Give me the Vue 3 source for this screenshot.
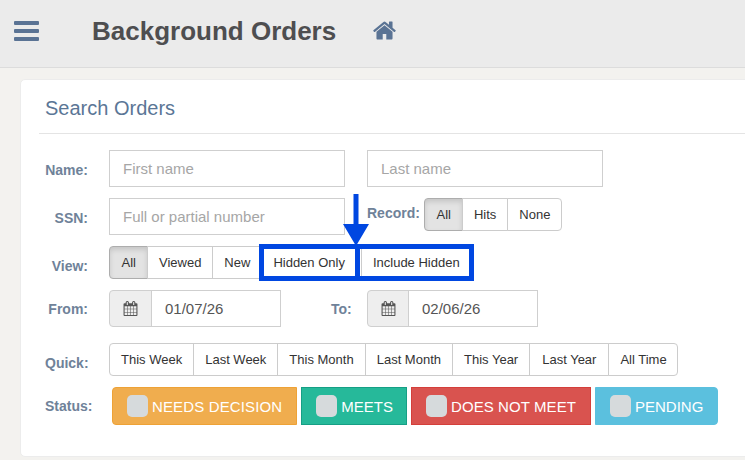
<template>
  <div class="page">
    <header class="topbar">
      <div class="burger"><span></span><span></span><span></span></div>
      <h1 class="page-title">Background Orders</h1>
      <svg class="home" viewBox="0 0 1792 1792"><path fill="currentColor" d="M1472 992v480q0 26-19 45t-45 19h-384v-384h-256v384h-384q-26 0-45-19t-19-45v-480q0-1 .5-3t.5-3l575-474 575 474q1 2 1 6zm223-69l-62 74q-8 9-21 11h-3q-13 0-21-7l-692-577-692 577q-12 8-24 7-13-2-21-11l-62-74q-8-10-7-23.500t11-21.500l719-599q32-26 76-26t76 26l244 204v-195q0-14 9-23t23-9h192q14 0 23 9t9 23v408l219 182q10 8 11 21.500t-7 23.500z"/></svg>
    </header>

    <main class="card">
      <h2 class="card-title">Search Orders</h2>
      <hr class="rule" />

      <form class="form" @submit.prevent>
        <div class="row row-name">
          <label class="lbl">Name:</label>
          <input class="field" placeholder="First name" />
          <input class="field field-last" placeholder="Last name" />
        </div>

        <div class="row row-ssn">
          <label class="lbl">SSN:</label>
          <input class="field" placeholder="Full or partial number" />
          <label class="lbl lbl-record">Record:</label>
          <div class="group">
            <button v-for="b in recordOpts" :key="b" type="button" class="btn" :class="{ active: b === 'All' }">{{ b }}</button>
          </div>
        </div>

        <div class="row row-view">
          <label class="lbl">View:</label>
          <div class="group">
            <button v-for="b in viewOpts" :key="b" type="button" class="btn" :class="{ active: b === 'All', wide: b === 'Hidden Only' }">{{ b }}</button>
          </div>
          <div class="callout"><i class="callout-bar"></i></div>
          <svg class="arrow" viewBox="0 0 26 52"><path fill="#0047e1" d="M10.500 0h5v30H26L13 52 0 30h10.500z"/></svg>
        </div>

        <div class="row row-dates">
          <label class="lbl lbl-date">From:</label>
          <div class="date">
            <span class="addon"><svg viewBox="0 0 1792 1792"><path fill="currentColor" :d="calendarPath"/></svg></span>
            <input class="date-input" value="01/07/26" />
          </div>
          <label class="lbl lbl-to">To:</label>
          <div class="date date-to">
            <span class="addon"><svg viewBox="0 0 1792 1792"><path fill="currentColor" :d="calendarPath"/></svg></span>
            <input class="date-input" value="02/06/26" />
          </div>
        </div>

        <div class="row row-quick">
          <label class="lbl">Quick:</label>
          <div class="group">
            <button v-for="b in quickOpts" :key="b" type="button" class="btn">{{ b }}</button>
          </div>
        </div>

        <div class="row row-status">
          <label class="lbl lbl-status">Status:</label>
          <div class="statuses">
            <button v-for="s in statuses" :key="s.label" type="button" class="status" :class="s.cls">
              <span class="check"></span>{{ s.label }}
            </button>
          </div>
        </div>
      </form>
    </main>
  </div>
</template>

<script setup>
const recordOpts = ['All', 'Hits', 'None']
const viewOpts = ['All', 'Viewed', 'New', 'Hidden Only', 'Include Hidden']
const quickOpts = ['This Week', 'Last Week', 'This Month', 'Last Month', 'This Year', 'Last Year', 'All Time']
const statuses = [
  { label: 'NEEDS DECISION', cls: 'orange' },
  { label: 'MEETS', cls: 'green' },
  { label: 'DOES NOT MEET', cls: 'red' },
  { label: 'PENDING', cls: 'blue' }
]
const calendarPath = 'M192 1664h288v-288h-288v288zm352 0h320v-288h-320v288zm-352-352h288v-320h-288v320zm352 0h320v-320h-320v320zm-352-384h288v-288h-288v288zm736 736h320v-288h-320v288zm-384-736h320v-288h-320v288zm768 736h288v-288h-288v288zm-384-352h320v-320h-320v320zm-352-864v-288q0-13-9.500-22.500t-22.500-9.500h-64q-13 0-22.500 9.500t-9.500 22.500v288q0 13 9.500 22.500t22.500 9.500h64q13 0 22.500-9.500t9.500-22.500zm736 864h288v-320h-288v320zm-384-384h320v-288h-320v288zm384 0h288v-288h-288v288zm32-480v-288q0-13-9.500-22.500t-22.500-9.500h-64q-13 0-22.500 9.500t-9.500 22.500v288q0 13 9.500 22.500t22.500 9.500h64q13 0 22.500-9.500t9.500-22.500zm384-64v1280q0 52-38 90t-90 38h-1408q-52 0-90-38t-38-90v-1280q0-52 38-90t90-38h128v-96q0-66 47-113t113-47h64q66 0 113 47t47 113v96h384v-96q0-66 47-113t113-47h64q66 0 113 47t47 113v96h128q52 0 90 38t38 90z'
</script>

<style>
html, body { margin: 0; overflow: hidden; }
</style>

<style scoped>
.page {
  width: 745px;
  height: 460px;
  overflow: hidden;
  background: #f3f2ef;
  font-family: "Liberation Sans", Arial, sans-serif;
  box-sizing: border-box;
}

.topbar {
  height: 68px;
  box-sizing: border-box;
  background: #ebebeb;
  border-bottom: 1px solid #dcdcdc;
  display: flex;
  align-items: center;
  padding-left: 14px;
}

.burger {
  width: 25px;
  display: flex;
  flex-direction: column;
  gap: 4px;
  margin-top: -6px;
}
.burger span {
  height: 4px;
  background: #5a7394;
  border-radius: 1px;
}

.page-title {
  margin: -5px 0 0 53px;
  font-size: 26px;
  font-weight: 700;
  color: #4e4e50;
}

.home {
  width: 25px;
  height: 25px;
  margin: -7px 0 0 36px;
  color: #5a7394;
}

.card {
  margin: 11px 0 0 20px;
  width: 760px;
  height: 378px;
  box-sizing: border-box;
  background: #fff;
  border-radius: 5px;
  border: 1px solid #ececec;
  padding-left: 18px;
}

.card-title {
  margin: 16px 0 0 6px;
  font-size: 20px;
  line-height: 24px;
  font-weight: 400;
  color: #5b7696;
}

.rule {
  margin: 13px 0 0;
  border: 0;
  border-top: 1px solid #e4e4e4;
}

.form {
  margin-left: 6px;
  padding-top: 16px;
}

.row {
  display: flex;
  align-items: flex-start;
  position: relative;
}
.row-name { height: 37px; }
.row-ssn { height: 37px; margin-top: 11px; }
.row-view { height: 33px; margin-top: 11px; }
.row-dates { height: 37px; margin-top: 11px; }
.row-quick { height: 33px; margin-top: 16px; }
.row-status { height: 38px; margin-top: 11px; }

.lbl {
  width: 43px;
  margin-right: 21px;
  flex: none;
  text-align: right;
  font-size: 14px;
  font-weight: 700;
  line-height: 40px;
  color: #6f8299;
  white-space: nowrap;
}
.lbl-date { line-height: 38px; }
.lbl-record {
  width: 54px;
  margin: 0 3px 0 22px;
  text-align: left;
  line-height: 30px;
}
.lbl-to {
  width: 20px;
  margin: 0 16px 0 50px;
  text-align: left;
  line-height: 38px;
}
.lbl-status {
  width: 47px;
  margin-right: 20px;
  line-height: 38px;
}

.field {
  width: 236px;
  height: 37px;
  box-sizing: border-box;
  border: 1px solid #cfcfcf;
  padding: 0 13px;
  font: 15px "Liberation Sans", Arial, sans-serif;
  color: #555;
  outline: none;
  background: #fff;
}
.field::placeholder { color: #a6a6a6; opacity: 1; }
.field-last { margin-left: 22px; }

.group { display: flex; }

.btn {
  height: 33px;
  box-sizing: border-box;
  margin: 0 0 0 -1px;
  padding: 0 11px;
  background: #fff;
  border: 1px solid #cccccc;
  font: 13px "Liberation Sans", Arial, sans-serif;
  color: #333;
  white-space: nowrap;
}
.btn:first-child {
  margin-left: 0;
  border-radius: 4px 0 0 4px;
}
.btn:last-child { border-radius: 0 4px 4px 0; }
.btn.wide { padding-right: 16px; }
.btn.active {
  padding: 0 11.5px;
  background: #e3e3e3;
  border-color: #adadad;
  box-shadow: inset 0 3px 5px rgba(0, 0, 0, 0.125);
}
.btn.active + .btn { padding-left: 10.5px; }
.row-quick .btn:nth-last-child(2) { padding: 0 12px; }
.row-quick .btn:last-child { padding-right: 10px; }

/* annotation drawn over the screenshot */
.callout {
  position: absolute;
  left: 214px;
  top: -2px;
  width: 215px;
  height: 37px;
  box-sizing: border-box;
  border: 5px solid #0047e1;
}
.callout-bar {
  position: absolute;
  left: 91px;
  top: 0;
  bottom: 0;
  width: 5px;
  background: #0047e1;
}
.arrow {
  position: absolute;
  left: 298px;
  top: -52px;
  width: 26px;
  height: 52px;
}

.date {
  display: flex;
  width: 172px;
  height: 37px;
  box-sizing: border-box;
}
.addon {
  width: 43px;
  flex: none;
  box-sizing: border-box;
  border: 1px solid #cfcfcf;
  border-radius: 4px 0 0 4px;
  background: #eeeeee;
  color: #555;
  display: flex;
  align-items: center;
  justify-content: center;
}
.addon svg { width: 15px; height: 15px; }
.date-input {
  flex: 1;
  min-width: 0;
  margin-left: -1px;
  box-sizing: border-box;
  border: 1px solid #cfcfcf;
  padding: 0 13px;
  font: 15px "Liberation Sans", Arial, sans-serif;
  color: #555;
  outline: none;
}
.date-to { width: 171px; }
.date-to .addon { width: 42px; }

.statuses {
  display: flex;
  gap: 4px;
}
.status {
  height: 38px;
  box-sizing: border-box;
  display: flex;
  align-items: center;
  padding: 0 14px;
  border: 1px solid transparent;
  font: 15px "Liberation Sans", Arial, sans-serif;
  color: #fff;
  white-space: nowrap;
}
.check {
  width: 21px;
  height: 22px;
  margin-right: 4px;
  border-radius: 5px;
  background: #d6dadc;
}
.orange { background: #f0ad4e; border-color: #eea236; border-radius: 4px 0 0 4px; letter-spacing: 0.14px; }
.green { background: #26b99a; border-color: #169f85; padding-right: 13px; }
.red { background: #d9534f; border-color: #d43f3a; letter-spacing: 0.08px; }
.blue { background: #5bc0de; border-color: #5bc0de; border-radius: 0 4px 4px 0; }
</style>
